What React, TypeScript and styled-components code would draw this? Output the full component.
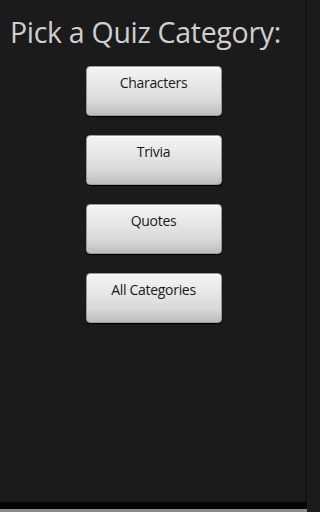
import React from "react";
import styled, { createGlobalStyle } from "styled-components";

const Global = createGlobalStyle`
  html, body { margin: 0; padding: 0; background: #1b1b1b; overflow: hidden; }
  #root { height: 512px; }
`;

const Screen = styled.div`
  width: 307px;
  height: 512px;
  box-sizing: border-box;
  display: flex;
  flex-direction: column;
  background: #1b1b1b;
  font-family: "Open Sans", "Noto Sans", sans-serif;
  overflow: hidden;
`;

const Content = styled.div`
  flex: 1;
  display: flex;
  flex-direction: column;
  border-right: 2px solid #141414;
`;

const Title = styled.h1`
  margin: 13px 0 0 10px;
  font-weight: 400;
  font-size: 28.5px;
  line-height: 38px;
  color: #cfcfcf;
  letter-spacing: -0.3px;
  white-space: nowrap;
`;

const List = styled.div`
  display: flex;
  flex-direction: column;
  align-items: center;
  gap: 19px;
  margin-top: 15px;
  padding-left: 2px;
`;

const Button = styled.button`
  width: 136px;
  height: 50px;
  box-sizing: border-box;
  border: 1px solid #9a9a9a;
  border-radius: 4px;
  background: linear-gradient(
    to bottom,
    #f4f4f4 0%,
    #e6e6e6 40%,
    #dadada 70%,
    #bdbdbd 100%
  );
  box-shadow: inset 0 1px 0 #ffffff, 0 1px 1px #000;
  font-family: "Open Sans", "Noto Sans", sans-serif;
  font-size: 14px;
  color: #1a1a1a;
  padding: 0 0 18px 0;
  letter-spacing: -0.3px;
  cursor: pointer;
`;

const BottomBar = styled.div`
  height: 7px;
  background: #050505;
  border-bottom: 3px solid #8a8a8a;
`;

const categories = ["Characters", "Trivia", "Quotes", "All Categories"];

export default function App() {
  return (
    <>
      <Global />
      <Screen>
        <Content>
          <Title>Pick a Quiz Category:</Title>
          <List>
            {categories.map((c) => (
              <Button key={c}>{c}</Button>
            ))}
          </List>
        </Content>
        <BottomBar />
      </Screen>
    </>
  );
}
